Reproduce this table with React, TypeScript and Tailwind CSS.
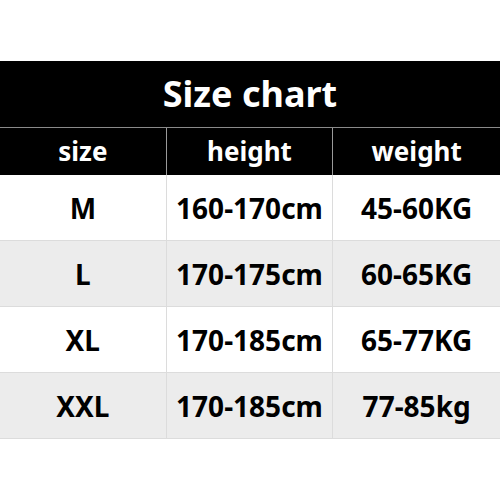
export default function App() {
  const rows = [
    { size: "M", height: "160-170cm", weight: "45-60KG" },
    { size: "L", height: "170-175cm", weight: "60-65KG" },
    { size: "XL", height: "170-185cm", weight: "65-77KG" },
    { size: "XXL", height: "170-185cm", weight: "77-85kg" },
  ]

  return (
    <div className="w-[500px] h-[500px] bg-white pt-[61px] font-['Noto_Sans',sans-serif] font-bold">
      <div className="bg-black text-white h-[67px] flex items-center justify-center text-[36px] border-b border-[#8a8a8a]">
        Size chart
      </div>
      <div className="bg-black text-white grid grid-cols-3 h-[47px] text-[26px]">
        <div className="flex items-center justify-center border-r border-[#9a9a9a]">size</div>
        <div className="flex items-center justify-center border-r border-[#9a9a9a]">height</div>
        <div className="flex items-center justify-center">weight</div>
      </div>
      {rows.map((row, i) => (
        <div
          key={row.size}
          className={`grid grid-cols-3 h-[66px] text-[28px] text-black border-b border-[#dcdcdc] ${i % 2 ? "bg-[#ececec]" : "bg-white"}`}
        >
          <div className="flex items-center justify-center border-r border-[#dcdcdc]">{row.size}</div>
          <div className="flex items-center justify-center border-r border-[#dcdcdc]">{row.height}</div>
          <div className="flex items-center justify-center">{row.weight}</div>
        </div>
      ))}
    </div>
  )
}
